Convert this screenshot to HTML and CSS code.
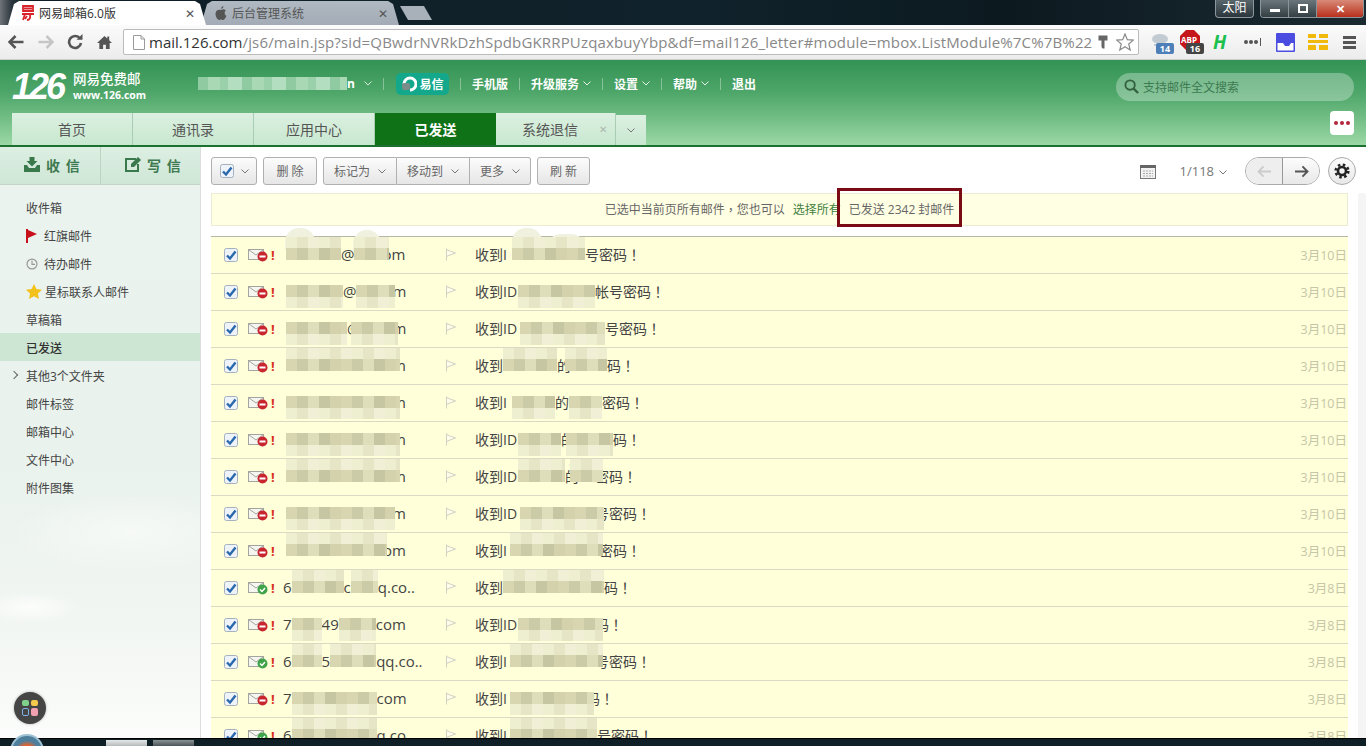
FILE: index.html
```html
<!DOCTYPE html>
<html>
<head>
  <meta charset="UTF-8">
  <title>网易邮箱6.0版</title>
  <link rel="stylesheet" href="styles.css">
</head>
<body>
  <svg class="defs" width="0" height="0">
    <symbol id="check" viewBox="0 0 14 14">
      <rect x="0.5" y="0.5" width="13" height="13" rx="2" fill="#eef3f9" stroke="#a5b1bf"/>
      <path d="M3 7.5 L6 10.5 L11.5 3.5" fill="none" stroke="#2a68ae" stroke-width="2.4"/>
    </symbol>
    <symbol id="mail-fail" viewBox="0 0 20 14">
      <rect x="0.5" y="1.5" width="15" height="10" fill="#f6f6f0" stroke="#a5a5a0"/>
      <path d="M1 2 L8 7 L15 2" fill="none" stroke="#a5a5a0"/>
      <circle cx="14.5" cy="8.5" r="5" fill="#c9252f"/>
      <rect x="11.5" y="7.5" width="6" height="2" fill="#fff"/>
    </symbol>
    <symbol id="mail-ok" viewBox="0 0 20 14">
      <rect x="0.5" y="1.5" width="15" height="10" fill="#f6f6f0" stroke="#a5a5a0"/>
      <path d="M1 2 L8 7 L15 2" fill="none" stroke="#a5a5a0"/>
      <circle cx="14.5" cy="8.5" r="5" fill="#3fa34a"/>
      <path d="M12 8.5 L14 10.5 L17 7" fill="none" stroke="#fff" stroke-width="1.5"/>
    </symbol>
    <symbol id="flag" viewBox="0 0 12 13">
      <path d="M1.5 0.5 V12.5 M1.5 1.5 Q5 3 10.500 5 Q6 6.500 1.500 8.500" fill="#fdfdea" stroke="#d0d0c4"/>
    </symbol>
    <symbol id="chev" viewBox="0 0 8 5">
      <path d="M0.5 0.5 L4 4 L7.5 0.5" fill="none" stroke="currentColor"/>
    </symbol>
  </svg>

  <div class="tabstrip">
    <div class="tab tab-on">
      <svg class="tab-ico" viewBox="0 0 14 16"><path d="M2 1 H12 V6 H2 Z M3 3.5 H11 M1 9 H13 M4 9 L2 15 M9 9 Q10 15 6 15 M6 11 L4 14" fill="none" stroke="#d8232a" stroke-width="1.8"/></svg>
      <span class="tab-title">网易邮箱6.0版</span>
      <span class="tab-x">✕</span>
    </div>
    <div class="tab tab-off">
      <svg class="tab-ico" viewBox="0 0 14 16"><path d="M9.5 1 Q9.5 3.5 7 4 Q7 1.5 9.5 1 Z M7 5 C9 4 10.5 4.200 11.800 5.500 C10 7 10.500 10 12.500 10.800 C11.500 13.500 10 15 9 15 C8 15 7.800 14.500 7 14.500 C6.200 14.500 5.800 15 5 15 C3.500 15 1.500 11.500 1.500 8.800 C1.500 5.500 4.500 4 7 5 Z" fill="#555"/></svg>
      <span class="tab-title">后台管理系统</span>
      <span class="tab-x">✕</span>
    </div>
    <div class="tab-new"></div>
    <div class="winbtns">
      <span class="user-btn">太阳</span>
      <div class="wincontrols">
        <span class="win win-min"><i></i></span>
        <span class="win win-max"><i></i></span>
        <span class="win win-close">✕</span>
      </div>
    </div>
  </div>

  <div class="browserbar">
    <svg class="nav-ico back" viewBox="0 0 16 14"><path d="M7.500 1 L1.500 7 L7.500 13 M2 7 H15.500" fill="none" stroke="currentColor" stroke-width="2.600"/></svg>
    <svg class="nav-ico fwd" viewBox="0 0 16 14"><path d="M8.500 1 L14.500 7 L8.500 13 M14 7 H0.500" fill="none" stroke="currentColor" stroke-width="2.600"/></svg>
    <svg class="nav-ico reload" viewBox="0 0 16 16"><path d="M13 4.500 A6 6 0 1 0 14 9" fill="none" stroke="currentColor" stroke-width="2.600"/><path d="M9.500 5.800 H15.500 V0 Z" fill="currentColor"/></svg>
    <svg class="nav-ico home" viewBox="0 0 16 15"><path d="M8 0.500 L0 8 H2.500 V14.500 H6.500 V10 H9.500 V14.500 H13.500 V8 H16 L13 5.200 V1 H11 V3.300 Z" fill="currentColor"/></svg>
    <div class="omnibox">
      <svg class="doc-ico" viewBox="0 0 12 15"><path d="M0.500 0.500 H8 L11.500 4 V14.500 H0.500 Z M8 0.500 V4 H11.500" fill="#fff" stroke="#9a9a9a"/></svg>
      <span class="url"><b>mail.126.com</b>/js6/main.jsp?sid=QBwdrNVRkDzhSpdbGKRRPUzqaxbuyYbp&amp;df=mail126_letter#module=mbox.ListModule%7C%7B%22</span>
      <svg class="key-ico" viewBox="0 0 10 14"><path d="M0.500 0.500 H9.500 V5.500 H6.500 V13.500 H4.500 L3.500 12 V5.500 H0.500 Z" fill="#666"/></svg>
      <svg class="star-ico" viewBox="0 0 18 18"><path d="M9 1 L11.300 6.700 L17.300 7.100 L12.700 11 L14.200 17 L9 13.700 L3.800 17 L5.300 11 L0.700 7.100 L6.700 6.700 Z" fill="#fff" stroke="#8a8a8a" stroke-width="1.200"/></svg>
    </div>
    <div class="ext ext-weather">
      <svg viewBox="0 0 20 14"><ellipse cx="10" cy="7" rx="8" ry="5" fill="#c3cbd2"/><path d="M5 12 V14 M10 12 V14 M15 12 V14" stroke="#8fa5bb"/></svg>
      <span class="ext-num num-blue">14</span>
    </div>
    <div class="ext ext-abp">
      <svg viewBox="0 0 20 20"><path d="M6 0 H14 L20 6 V14 L14 20 H6 L0 14 V6 Z" fill="#c6141d"/></svg>
      <span class="abp-txt">ABP</span>
      <span class="ext-num num-dark">16</span>
    </div>
    <span class="ext-h">H</span>
    <div class="ext-dots"><i></i><i></i><i></i><em></em></div>
    <svg class="ext-square" viewBox="0 0 19 19"><rect width="19" height="19" rx="1" fill="#4a4de0"/><path d="M1.500 10 H7 L9 13 H13 L15 10 H17.500 V17.500 H1.500 Z" fill="#fff"/></svg>
    <svg class="ext-grid" viewBox="0 0 20 16"><path d="M0 0 H8 V4 H0 Z M11 0 H20 V4 H11 Z M0 6 H20 V9 H0 Z M0 11 H8 V16 H0 Z M11 11 H20 V16 H11 Z" fill="#f1b90a"/></svg>
    <div class="menu-ico"><i></i><i></i><i></i></div>
  </div>

  <div class="mailhead">
    <div class="headrow">
      <div class="logo">
        <span class="logo-num">126</span>
        <div class="logo-txt">
          <span class="logo-cn">网易免费邮</span>
          <span class="logo-en">www.126.com</span>
        </div>
      </div>
      <div class="topnav">
        <div class="account">
          <span class="acc-blur"></span><span class="acc-tail">n</span>
          <svg class="chev acc-chev"><use href="#chev"/></svg>
        </div>
        <span class="sep"></span>
        <span class="yixin">
          <svg viewBox="0 0 16 16"><path d="M3 8 A6 6 0 1 1 9 14" fill="none" stroke="#fff" stroke-width="3"/><rect x="1" y="7" width="8" height="7" rx="2" fill="#7c8c88"/></svg>
          易信
        </span>
        <span class="sep"></span>
        <a class="toplink">手机版</a>
        <span class="sep"></span>
        <a class="toplink">升级服务<svg class="chev"><use href="#chev"/></svg></a>
        <span class="sep"></span>
        <a class="toplink">设置<svg class="chev"><use href="#chev"/></svg></a>
        <span class="sep"></span>
        <a class="toplink">帮助<svg class="chev"><use href="#chev"/></svg></a>
        <span class="sep"></span>
        <a class="toplink">退出</a>
      </div>
      <div class="search">
        <svg viewBox="0 0 16 16"><circle cx="6.500" cy="6.500" r="5" fill="none" stroke="#33603f" stroke-width="2"/><path d="M10 10 L15 15" stroke="#33603f" stroke-width="2.400"/></svg>
        <span>支持邮件全文搜索</span>
      </div>
    </div>
    <div class="navrow">
      <div class="navtab">首页</div>
      <div class="navtab">通讯录</div>
      <div class="navtab">应用中心</div>
      <div class="navtab navtab-on">已发送</div>
      <div class="navtab navtab-close">系统退信<span class="navx">✕</span></div>
      <div class="navmore"><svg class="chev"><use href="#chev"/></svg></div>
      <div class="dots-btn"><i></i><i></i><i></i></div>
    </div>
  </div>

  <div class="main">
    <div class="sidebar">
      <div class="compose">
        <div class="compose-btn">
          <svg viewBox="0 0 16 15"><path d="M5.500 0 H10.500 V4 H13.500 L8 9.500 L2.500 4 H5.500 Z M0 8 H3 L5 11 H11 L13 8 H16 V15 H0 Z" fill="#39794c"/></svg>
          <span>收 信</span>
        </div>
        <div class="compose-btn">
          <svg viewBox="0 0 16 15"><path d="M11 2 H1 V14 H13 V7" fill="none" stroke="#39794c" stroke-width="2"/><path d="M6 7 L13 0 L16 3 L9 10 H6 Z" fill="#39794c"/></svg>
          <span>写 信</span>
        </div>
      </div>
      <ul class="folders">
        <li>收件箱</li>
        <li class="sub"><svg viewBox="0 0 12 14"><path d="M1 0 V14" stroke="#c8101a" stroke-width="2"/><path d="M2 1 L11 5 L2 9 Z" fill="#c8101a"/></svg>红旗邮件</li>
        <li class="sub"><svg viewBox="0 0 14 14"><circle cx="7" cy="7" r="5.800" fill="none" stroke="#999" stroke-width="1.400"/><path d="M7 3 V7.500 H10.500" fill="none" stroke="#999" stroke-width="1.300"/></svg>待办邮件</li>
        <li class="sub star"><svg viewBox="0 0 16 15"><path d="M8 0 L10.400 5 L16 5.700 L11.900 9.400 L13 15 L8 12.300 L3 15 L4.100 9.400 L0 5.700 L5.600 5 Z" fill="#f3c11b"/></svg>星标联系人邮件</li>
        <li>草稿箱</li>
        <li class="on">已发送</li>
        <li class="more">其他3个文件夹</li>
        <li>邮件标签</li>
        <li>邮箱中心</li>
        <li>文件中心</li>
        <li>附件图集</li>
      </ul>
      <div class="appdot">
        <i class="g"></i><i class="y"></i><i class="b"></i><i class="p"></i>
      </div>
    </div>

    <div class="content">
      <div class="toolbar">
        <button class="btn btn-check"><svg class="cb"><use href="#check"/></svg><svg class="chev"><use href="#chev"/></svg></button>
        <button class="btn btn-del">删 除</button>
        <div class="btngroup">
          <button class="btn btn-mark">标记为<svg class="chev"><use href="#chev"/></svg></button>
          <button class="btn btn-move">移动到<svg class="chev"><use href="#chev"/></svg></button>
          <button class="btn btn-more">更多<svg class="chev"><use href="#chev"/></svg></button>
        </div>
        <button class="btn btn-ref">刷 新</button>
        <div class="pager">
          <svg class="cal" viewBox="0 0 16 15"><rect x="0.500" y="1.500" width="15" height="13" fill="#f2f2f2" stroke="#777"/><rect y="1" width="16" height="3" fill="#666"/><path d="M3 7 H13 M3 9.500 H13 M3 12 H13" stroke="#aaa" stroke-dasharray="2 1"/></svg>
          <span class="pageno">1/118<svg class="chev"><use href="#chev"/></svg></span>
          <div class="arrows">
            <span class="arrow arrow-off"><svg viewBox="0 0 16 14"><path d="M7 1.500 L1.500 7 L7 12.500 M2 7 H15" fill="none" stroke="currentColor" stroke-width="2"/></svg></span>
            <span class="arrow"><svg viewBox="0 0 16 14"><path d="M9 1.500 L14.500 7 L9 12.500 M14 7 H1" fill="none" stroke="currentColor" stroke-width="2"/></svg></span>
          </div>
          <span class="gear">
            <svg viewBox="0 0 16 16"><circle cx="8" cy="8" r="4" fill="none" stroke="#222" stroke-width="2.600"/><circle cx="8" cy="8" r="6.300" fill="none" stroke="#222" stroke-width="2.600" stroke-dasharray="2.500 2.450"/></svg>
          </span>
        </div>
      </div>

      <div class="notice">
        已选中当前页所有邮件<span class="punct">，</span>您也可以<a class="notice-link">选择所有</a><span class="notice-count">已发送 2342 封邮件</span>
      </div>

      <div class="scrolltrack"></div>

      <div class="maillist">
        <span class="blob blob-1"></span>
        <span class="blob blob-2"></span>
        <span class="blob blob-3"></span>
        <span class="blob blob-4"></span>

        <div class="row">
          <svg class="cb"><use href="#check"/></svg><svg class="st"><use href="#mail-fail"/></svg><b class="bang">!</b>
          <div class="sender"><span class="mask lead w55"></span>@<span class="mask w35"></span><span class="tail ov7">om</span></div>
          <svg class="fl"><use href="#flag"/></svg>
          <div class="subject">收到I<span class="mask gap5 w73"></span>号密码<span class="punct">！</span></div>
          <div class="date">3月10日</div>
        </div>
        <div class="row">
          <svg class="cb"><use href="#check"/></svg><svg class="st"><use href="#mail-fail"/></svg><b class="bang">!</b>
          <div class="sender"><span class="mask lead down w57"></span>@<span class="mask down w39"></span><span class="tail ov3">m</span></div>
          <svg class="fl"><use href="#flag"/></svg>
          <div class="subject">收到ID<span class="mask down gap1 w77"></span>帐号密码<span class="punct">！</span></div>
          <div class="date">3月10日</div>
        </div>
        <div class="row">
          <svg class="cb"><use href="#check"/></svg><svg class="st"><use href="#mail-fail"/></svg><b class="bang">!</b>
          <div class="sender"><span class="mask lead down w61"></span>@<span class="mask down ov9 w47"></span><span class="tail ov6">m</span></div>
          <svg class="fl"><use href="#flag"/></svg>
          <div class="subject">收到ID<span class="mask down gap3 w85"></span>号密码<span class="punct">！</span></div>
          <div class="date">3月10日</div>
        </div>
        <div class="row">
          <svg class="cb"><use href="#check"/></svg><svg class="st"><use href="#mail-fail"/></svg><b class="bang">!</b>
          <div class="sender"><span class="mask lead w114"></span><span class="tail ov8">m</span></div>
          <svg class="fl"><use href="#flag"/></svg>
          <div class="subject">收到<span class="mask w54"></span>的<span class="mask ov6 w42"></span>码<span class="punct">！</span></div>
          <div class="date">3月10日</div>
        </div>
        <div class="row">
          <svg class="cb"><use href="#check"/></svg><svg class="st"><use href="#mail-fail"/></svg><b class="bang">!</b>
          <div class="sender"><span class="mask lead down w114"></span><span class="tail ov8">m</span></div>
          <svg class="fl"><use href="#flag"/></svg>
          <div class="subject">收到I<span class="mask down gap5 w43"></span>的<span class="mask down w33"></span>密码<span class="punct">！</span></div>
          <div class="date">3月10日</div>
        </div>
        <div class="row">
          <svg class="cb"><use href="#check"/></svg><svg class="st"><use href="#mail-fail"/></svg><b class="bang">!</b>
          <div class="sender"><span class="mask lead down w114"></span><span class="tail ov8">m</span></div>
          <svg class="fl"><use href="#flag"/></svg>
          <div class="subject">收到ID<span class="mask down gap1 w43"></span>的<span class="mask down ov9 w47"></span>码<span class="punct">！</span></div>
          <div class="date">3月10日</div>
        </div>
        <div class="row">
          <svg class="cb"><use href="#check"/></svg><svg class="st"><use href="#mail-fail"/></svg><b class="bang">!</b>
          <div class="sender"><span class="mask lead w114"></span><span class="tail ov8">m</span></div>
          <svg class="fl"><use href="#flag"/></svg>
          <div class="subject">收到ID<span class="mask gap1 w47"></span>的<span class="mask ov9 w33"></span><span class="ov8">密码</span><span class="punct">！</span></div>
          <div class="date">3月10日</div>
        </div>
        <div class="row">
          <svg class="cb"><use href="#check"/></svg><svg class="st"><use href="#mail-fail"/></svg><b class="bang">!</b>
          <div class="sender"><span class="mask lead down w109"></span><span class="tail ov3">m</span></div>
          <svg class="fl"><use href="#flag"/></svg>
          <div class="subject">收到ID<span class="mask down gap3 w84"></span><span class="ov9">号密码</span><span class="punct">！</span></div>
          <div class="date">3月10日</div>
        </div>
        <div class="row">
          <svg class="cb"><use href="#check"/></svg><svg class="st"><use href="#mail-fail"/></svg><b class="bang">!</b>
          <div class="sender"><span class="mask lead w101"></span><span class="tail ov4">om</span></div>
          <svg class="fl"><use href="#flag"/></svg>
          <div class="subject">收到I<span class="mask gap3 w93"></span><span class="ov4">密码</span><span class="punct">！</span></div>
          <div class="date">3月10日</div>
        </div>
        <div class="row">
          <svg class="cb"><use href="#check"/></svg><svg class="st"><use href="#mail-ok"/></svg><b class="bang">!</b>
          <div class="sender">6<span class="mask w52"></span>c<span class="mask w27"></span><span class="tail">q.co..</span></div>
          <svg class="fl"><use href="#flag"/></svg>
          <div class="subject">收到<span class="mask w101"></span>码<span class="punct">！</span></div>
          <div class="date">3月8日</div>
        </div>
        <div class="row">
          <svg class="cb"><use href="#check"/></svg><svg class="st"><use href="#mail-fail"/></svg><b class="bang">!</b>
          <div class="sender">7<span class="mask down w30"></span>49<span class="mask down w37"></span><span class="tail">com</span></div>
          <svg class="fl"><use href="#flag"/></svg>
          <div class="subject">收到ID<span class="mask down gap1 w85"></span><span class="ov8">码</span><span class="punct">！</span></div>
          <div class="date">3月8日</div>
        </div>
        <div class="row">
          <svg class="cb"><use href="#check"/></svg><svg class="st"><use href="#mail-ok"/></svg><b class="bang">!</b>
          <div class="sender">6<span class="mask w30"></span>5<span class="mask w46"></span><span class="tail">qq.co..</span></div>
          <svg class="fl"><use href="#flag"/></svg>
          <div class="subject">收到I<span class="mask gap3 w93"></span><span class="ov8">号密码</span><span class="punct">！</span></div>
          <div class="date">3月8日</div>
        </div>
        <div class="row">
          <svg class="cb"><use href="#check"/></svg><svg class="st"><use href="#mail-fail"/></svg><b class="bang">!</b>
          <div class="sender">7<span class="mask down w85"></span><span class="tail">com</span></div>
          <svg class="fl"><use href="#flag"/></svg>
          <div class="subject">收到I<span class="mask down gap3 w84"></span><span class="ov8">码</span><span class="punct">！</span></div>
          <div class="date">3月8日</div>
        </div>
        <div class="row">
          <svg class="cb"><use href="#check"/></svg><svg class="st"><use href="#mail-ok"/></svg><b class="bang">!</b>
          <div class="sender">6<span class="mask w85"></span><span class="tail">q.co</span></div>
          <svg class="fl"><use href="#flag"/></svg>
          <div class="subject">收到I<span class="mask gap3 w87"></span>号密码<span class="punct">！</span></div>
          <div class="date">3月8日</div>
        </div>
      </div>
    </div>
  </div>

  <div class="taskbar">
    <span class="orb"></span>
    <span class="taskbtn"></span>
    <span class="taskbtn taskbtn-dim"></span>
  </div>
</body>
</html>
```

FILE: styles.css
```css
* {
  box-sizing: border-box;
}

html, body {
  margin: 0;
  height: 746px;
  overflow: hidden;
}

body {
  display: flex;
  flex-direction: column;
  font-family: "Open Sans", "Noto Sans CJK SC", sans-serif;
  font-size: 12px;
  color: #444;
  background: #fff;
}

.defs {
  position: absolute;
}

svg {
  display: block;
  flex: none;
}

.chev {
  width: 8px;
  height: 5px;
  color: #777;
}

/* centred full-width punctuation */
.punct {
  font-family: "Noto Sans CJK TC", sans-serif;
}

/* browser tabs */
.tabstrip {
  height: 25px;
  flex: none;
  display: flex;
  align-items: flex-end;
  padding-left: 8px;
  background: linear-gradient(90deg, #6f7479 0, #28343a 12px, #0f1e26 30px, #10222b 700px, #0c1a20 1000px, #1a2a30 100%);
}

.tab {
  height: 24px;
  width: 198px;
  display: flex;
  align-items: center;
  padding: 0 11px 0 13px;
  font-size: 12px;
  clip-path: polygon(0 100%, 6px 12%, 11px 0, 187px 0, 192px 12%, 100% 100%);
}

.tab-on {
  background: #fff;
  color: #333;
  position: relative;
  z-index: 1;
}

.tab-off {
  margin-left: -5px;
  background: linear-gradient(#b0b8c1, #a3acb6);
  color: #555;
}

.tab-ico {
  width: 14px;
  height: 16px;
  margin-right: 4px;
}

.tab-title {
  flex: 1;
}

.tab-x {
  font-size: 12px;
  color: #555;
}

.tab-new {
  width: 32px;
  height: 14px;
  margin: 0 0 5px 1px;
  background: #a8b0b9;
  clip-path: polygon(0 0, 24px 0, 100% 100%, 8px 100%);
}

.winbtns {
  margin-left: auto;
  align-self: flex-start;
  display: flex;
  padding-right: 2px;
}

.user-btn {
  width: 39px;
  height: 18px;
  margin-right: 6px;
  border: 1px solid #8b979c;
  border-top: none;
  border-radius: 0 0 4px 4px;
  background: linear-gradient(#59666b, #2a363b);
  color: #fff;
  font-size: 12px;
  line-height: 16px;
  text-align: center;
}

.wincontrols {
  display: flex;
  height: 18px;
  border: 1px solid #8b979c;
  border-top: none;
  border-radius: 0 0 4px 4px;
  overflow: hidden;
}

.win {
  width: 28px;
  display: flex;
  align-items: center;
  justify-content: center;
  background: linear-gradient(#6a767b, #343f44);
  border-right: 1px solid #87949a;
}

.win-min i {
  width: 10px;
  height: 3px;
  margin-top: 3px;
  background: #fff;
}

.win-max i {
  width: 10px;
  height: 9px;
  border: 2px solid #fff;
}

.win-close {
  width: 46px;
  border: none;
  background: linear-gradient(#d98a78, #b8301c);
  color: #fff;
  font-size: 11px;
  font-weight: 700;
}

/* browser toolbar */
.browserbar {
  height: 35px;
  flex: none;
  display: flex;
  align-items: center;
  padding-left: 8px;
  background: linear-gradient(#fbfbfb, #ececec);
  border-bottom: 1px solid #ccc;
}

.nav-ico {
  color: #555;
}

.back {
  width: 16px;
  height: 14px;
}

.fwd {
  width: 16px;
  height: 14px;
  margin-left: 14px;
  color: #c6c6c6;
}

.reload {
  width: 16px;
  height: 16px;
  margin-left: 13px;
}

.home {
  width: 15px;
  height: 15px;
  margin-left: 14px;
}

.omnibox {
  width: 1016px;
  height: 26px;
  margin-left: 11px;
  display: flex;
  align-items: center;
  padding: 0 4px 0 9px;
  background: #fff;
  border: 1px solid #bbb;
  border-radius: 2px;
}

.doc-ico {
  width: 12px;
  height: 15px;
  margin-right: 4px;
}

.url {
  flex: 1;
  font-size: 15px;
  letter-spacing: 0.16px;
  color: #888;
  white-space: nowrap;
  overflow: hidden;
}

.url b {
  font-weight: 400;
  letter-spacing: 0;
  color: #333;
}

.key-ico {
  width: 10px;
  height: 14px;
  margin-right: 8px;
}

.star-ico {
  width: 18px;
  height: 18px;
}

.ext {
  position: relative;
  flex: none;
}

.ext-weather {
  width: 24px;
  height: 24px;
  margin-left: 11px;
}

.ext-weather svg {
  width: 20px;
  height: 14px;
  margin-top: 2px;
}

.ext-abp {
  width: 24px;
  height: 24px;
  margin-left: 6px;
}

.ext-abp svg {
  width: 20px;
  height: 20px;
}

.abp-txt {
  position: absolute;
  left: 1px;
  top: 4px;
  color: #fff;
  font-size: 8px;
  font-weight: 700;
}

.ext-num {
  position: absolute;
  right: 0;
  bottom: 0;
  width: 18px;
  height: 11px;
  border-radius: 2px;
  color: #fff;
  font-size: 9px;
  font-weight: 700;
  line-height: 11px;
  text-align: center;
}

.num-blue {
  background: #4f7fb8;
}

.num-dark {
  background: #444;
}

.ext-h {
  width: 18px;
  margin-left: 9px;
  color: #1cc04e;
  font-size: 19px;
  font-weight: 700;
  font-style: italic;
  line-height: 1;
}

.ext-dots {
  width: 20px;
  margin-left: 13px;
  display: flex;
  align-items: center;
  gap: 1px;
}

.ext-dots i {
  width: 4px;
  height: 4px;
  border-radius: 50%;
  background: #555;
}

.ext-dots em {
  width: 1px;
  height: 8px;
  margin-left: 1px;
  background: #555;
}

.ext-square {
  width: 19px;
  height: 19px;
  margin-left: 12px;
}

.ext-grid {
  width: 20px;
  height: 16px;
  margin-left: 13px;
}

.menu-ico {
  width: 13px;
  margin-left: 15px;
  display: flex;
  flex-direction: column;
  gap: 2px;
}

.menu-ico i {
  height: 3px;
  background: #555;
}

/* mail header */
.mailhead {
  height: 87px;
  flex: none;
  display: flex;
  flex-direction: column;
  padding-left: 12px;
  background: linear-gradient(#329354 0, #4ea669 38%, #74bf87 70%, #9bd8a6 100%);
  border-bottom: 2px solid #1c7030;
}

.headrow {
  height: 53px;
  flex: none;
  display: flex;
  align-items: center;
  color: #fff;
}

.logo {
  width: 186px;
  flex: none;
  display: flex;
  align-items: center;
}

.logo-num {
  width: 60px;
  font-family: "Liberation Sans", sans-serif;
  font-size: 36px;
  font-weight: 700;
  font-style: italic;
  letter-spacing: -3px;
  line-height: 1;
}

.logo-txt {
  display: flex;
  flex-direction: column;
  margin-left: 1px;
}

.logo-cn {
  font-size: 13.5px;
  font-weight: 500;
  line-height: 17px;
}

.logo-en {
  font-size: 10.5px;
  font-weight: 700;
  line-height: 15px;
}

.topnav {
  display: flex;
  align-items: center;
  padding-bottom: 6px;
}

.account {
  width: 174px;
  flex: none;
  display: flex;
  align-items: center;
}

.acc-blur {
  width: 152px;
  height: 13px;
  background: repeating-linear-gradient(90deg, #8fcaa0 0 10px, #a8d8b4 10px 22px, #9ad0aa 22px 30px, #b4dec0 30px 44px);
}

.acc-tail {
  font-size: 12px;
  font-weight: 700;
}

.acc-chev {
  margin-left: 9px;
  color: #d5eedc;
}

.sep {
  width: 1px;
  height: 12px;
  margin: 0 11px;
  flex: none;
  background: rgba(255, 255, 255, 0.35);
}

.yixin {
  width: 53px;
  height: 22px;
  flex: none;
  display: flex;
  align-items: center;
  justify-content: center;
  gap: 2px;
  margin-left: 1px;
  border-radius: 5px;
  background: #13a88c;
  font-size: 12px;
  font-weight: 700;
}

.yixin svg {
  width: 16px;
  height: 16px;
}

.toplink {
  display: flex;
  align-items: center;
  font-size: 12px;
  font-weight: 700;
  gap: 4px;
}

.toplink .chev {
  color: #e3f3e7;
}

.search {
  width: 238px;
  height: 28px;
  margin-left: auto;
  margin-right: 12px;
  display: flex;
  align-items: center;
  gap: 4px;
  padding-left: 8px;
  border-radius: 14px;
  background: rgba(255, 255, 255, 0.3);
  color: #3c7a50;
  font-size: 12px;
}

.search svg {
  width: 15px;
  height: 15px;
}

.navrow {
  flex: 1;
  display: flex;
  align-items: flex-end;
}

.navtab {
  width: 121px;
  height: 32px;
  display: flex;
  align-items: center;
  justify-content: center;
  position: relative;
  padding-bottom: 1px;
  background: linear-gradient(#dcf0e1, #c8e8d0);
  border-right: 1px solid #a9cdb3;
  color: #555;
  font-size: 14px;
}

.navtab-on {
  background: #0f7216;
  border: none;
  color: #fff;
  font-weight: 700;
}

.navtab-close {
  width: 120px;
  justify-content: flex-start;
  padding-left: 26px;
}

.navx {
  position: absolute;
  right: 8px;
  color: #aab8ae;
  font-size: 10px;
}

.navmore {
  width: 30px;
  height: 30px;
  display: flex;
  align-items: center;
  justify-content: center;
  background: linear-gradient(#dcf0e1, #c8e8d0);
}

.dots-btn {
  width: 24px;
  height: 24px;
  margin: -2px 12px 10px auto;
  display: flex;
  align-items: center;
  justify-content: center;
  gap: 2px;
  border-radius: 4px;
  background: #fff;
}

.dots-btn i {
  width: 4px;
  height: 4px;
  border-radius: 50%;
  background: #b3263a;
}

/* page body */
.main {
  flex: 1;
  min-height: 0;
  display: flex;
  overflow: hidden;
}

.sidebar {
  width: 201px;
  flex: none;
  position: relative;
  border-right: 1px solid #ddd;
  background:
    radial-gradient(ellipse 50px 16px at 30px 460px, rgba(255, 255, 255, 0.8), transparent),
    radial-gradient(ellipse 120px 40px at 130px 385px, rgba(255, 255, 255, 0.5), transparent),
    linear-gradient(#eaf3ee 0, #e9f2ec 300px, #f0f5f1 450px, #fbfcfb 100%);
}

.compose {
  height: 38px;
  display: flex;
  background: linear-gradient(#dcefe2, #cfe6d7);
  border-bottom: 1px solid #c3d5c9;
}

.compose-btn {
  width: 100px;
  display: flex;
  align-items: center;
  gap: 6px;
  padding: 0 0 2px 24px;
  color: #3e7a50;
  font-size: 14px;
  font-weight: 700;
  letter-spacing: 1px;
}

.compose-btn + .compose-btn {
  border-left: 1px solid #bdd4c5;
}

.compose-btn svg {
  width: 16px;
  height: 15px;
}

.folders {
  list-style: none;
  margin: 0;
  padding: 8px 0 0;
}

.folders li {
  height: 28px;
  display: flex;
  align-items: center;
  padding: 1px 0 0 26px;
  position: relative;
  color: #444;
  font-size: 12px;
}

.folders .sub svg {
  width: 12px;
  height: 14px;
  margin-right: 6px;
}

.folders .star svg {
  width: 16px;
  height: 15px;
  margin-right: 3px;
}

.folders .on {
  background: #cde6d3;
  color: #333;
  font-weight: 500;
}

.folders .more::before {
  content: "";
  position: absolute;
  left: 11px;
  top: 11px;
  width: 5px;
  height: 5px;
  border-top: 1px solid #666;
  border-right: 1px solid #666;
  transform: rotate(45deg);
}

.appdot {
  position: absolute;
  left: 14px;
  top: 545px;
  width: 32px;
  height: 32px;
  padding: 8px;
  display: grid;
  grid-template-columns: 1fr 1fr;
  gap: 2px;
  border-radius: 50%;
  background: #454545;
  box-shadow: 0 0 3px rgba(0, 0, 0, 0.3);
}

.appdot i {
  border-radius: 2px;
}

.appdot .g {
  background: #7ed08a;
}

.appdot .y {
  background: #f2c94c;
}

.appdot .b {
  border: 1px solid #7fb0e6;
}

.appdot .p {
  background: #f0a0b0;
}

.content {
  flex: 1;
  min-width: 0;
  position: relative;
  padding: 10px 18px 0 10px;
}

.toolbar {
  height: 28px;
  display: flex;
  gap: 6px;
}

.btn {
  height: 28px;
  margin: 0;
  padding: 0;
  display: flex;
  align-items: center;
  justify-content: center;
  border: 1px solid #b0b0b0;
  border-radius: 3px;
  background: linear-gradient(#fcfcfc, #e6e6e6);
  color: #666;
  font-family: inherit;
  font-size: 12px;
}

.btn-check {
  width: 46px;
  gap: 7px;
}

.btn .cb {
  width: 14px;
  height: 14px;
}

.btn-del {
  width: 54px;
}

.btn-ref {
  width: 53px;
}

.btngroup {
  display: flex;
}

.btngroup .btn {
  gap: 8px;
  border-radius: 0;
  border-left: none;
}

.btngroup .btn:first-child {
  border-left: 1px solid #b0b0b0;
  border-radius: 3px 0 0 3px;
}

.btngroup .btn:last-child {
  border-radius: 0 3px 3px 0;
}

.btn-mark {
  width: 74px;
}

.btn-move {
  width: 73px;
}

.btn-more {
  width: 61px;
}

.pager {
  margin-left: auto;
  margin-right: -8px;
  display: flex;
  align-items: center;
}

.cal {
  width: 16px;
  height: 15px;
}

.pageno {
  display: flex;
  align-items: center;
  gap: 5px;
  margin-left: 24px;
  color: #777;
  font-size: 13px;
}

.pageno .chev {
  margin-top: 2px;
}

.arrows {
  width: 75px;
  height: 28px;
  margin-left: 18px;
  display: flex;
  border: 1px solid #aaa;
  border-radius: 14px;
  overflow: hidden;
}

.arrow {
  flex: 1;
  display: flex;
  align-items: center;
  justify-content: center;
  background: linear-gradient(#fcfcfc, #e8e8e8);
  color: #555;
}

.arrow svg {
  width: 15px;
  height: 13px;
}

.arrow-off {
  border-right: 1px solid #999;
  background: #eee;
  color: #ccc;
}

.gear {
  width: 28px;
  height: 28px;
  margin-left: 8px;
  display: flex;
  align-items: center;
  justify-content: center;
  border: 1px solid #aaa;
  border-radius: 50%;
  background: linear-gradient(#fcfcfc, #e8e8e8);
}

.gear svg {
  width: 16px;
  height: 16px;
}

.notice {
  height: 33px;
  margin-top: 8px;
  display: flex;
  align-items: center;
  justify-content: center;
  padding-bottom: 1px;
  background: #ffffe3;
  border: 1px solid #ecebd4;
  color: #666;
  font-size: 12px;
}

.notice-link {
  margin-left: 8px;
  color: #3f7f3f;
}

.notice-count {
  position: relative;
  margin-left: 8px;
}

/* annotation frame drawn over the notice */
.notice-count::after {
  content: "";
  position: absolute;
  left: -12px;
  right: -8px;
  top: -12px;
  bottom: -9px;
  border: 3px solid #7a0a14;
}

.scrolltrack {
  position: absolute;
  right: 0;
  top: 46px;
  bottom: 0;
  width: 8px;
  background: #f5f5f5;
  border-radius: 3px 3px 0 0;
}

.maillist {
  position: relative;
  margin-top: 10px;
  border-top: 1px solid #b5b8a5;
}

/* smudges from the original blur that spill past the first row */
.blob {
  position: absolute;
  height: 22px;
  border-radius: 14px 14px 0 0;
  background: #f1f1e0;
  z-index: 1;
}

.blob-1 {
  left: 74px;
  top: -9px;
  width: 30px;
}

.blob-2 {
  left: 142px;
  top: -7px;
  width: 28px;
}

.blob-3 {
  left: 301px;
  top: -9px;
  width: 30px;
}

.blob-4 {
  left: 336px;
  top: -3px;
  width: 38px;
}

.row {
  height: 37px;
  display: flex;
  align-items: center;
  padding: 0 0 1px 13px;
  background: #ffffd9;
  border-bottom: 1px solid #d9d9c4;
}

.row .cb {
  width: 14px;
  height: 14px;
}

.st {
  width: 20px;
  height: 14px;
  margin-left: 10px;
}

.bang {
  width: 6px;
  margin-left: 3px;
  color: #d8301c;
  font-size: 13px;
  font-weight: 700;
  line-height: 14px;
}

.sender {
  width: 162px;
  margin-left: 6px;
  padding-bottom: 2px;
  display: flex;
  align-items: center;
  color: #444;
  font-size: 15px;
  white-space: nowrap;
}

.fl {
  width: 12px;
  height: 13px;
}

.subject {
  flex: 1;
  margin-left: 18px;
  padding-bottom: 2px;
  display: flex;
  align-items: center;
  color: #444;
  font-size: 14px;
  white-space: nowrap;
}

.date {
  padding: 0 1px 1px 0;
  color: #c6c6a8;
  font-size: 12.5px;
}

/* mosaic over private text */
.mask {
  height: 12px;
  flex: none;
  position: relative;
  z-index: 1;
  background: repeating-linear-gradient(90deg, #d7d6b1 0 11px, #cccba7 11px 22px, #dfdebb 22px 33px, #c7c6a3 33px 44px, #d3d2ad 44px 55px);
}

.mask::before {
  content: "";
  position: absolute;
  left: 0;
  right: 0;
  bottom: 100%;
  height: 11px;
  background: repeating-linear-gradient(90deg, #eeeed0 0 11px, #e6e5c6 11px 22px, #f1f0d6 22px 33px);
}

.mask.down::before {
  top: 100%;
  bottom: auto;
}

.lead {
  margin-left: 3px;
}

.gap1 {
  margin-left: 1px;
}

.gap3 {
  margin-left: 3px;
}

.gap5 {
  margin-left: 5px;
}

.w27 { width: 27px; }
.w30 { width: 30px; }
.w33 { width: 33px; }
.w35 { width: 35px; }
.w37 { width: 37px; }
.w39 { width: 39px; }
.w42 { width: 42px; }
.w43 { width: 43px; }
.w46 { width: 46px; }
.w47 { width: 47px; }
.w52 { width: 52px; }
.w54 { width: 54px; }
.w55 { width: 55px; }
.w57 { width: 57px; }
.w61 { width: 61px; }
.w73 { width: 73px; }
.w77 { width: 77px; }
.w84 { width: 84px; }
.w85 { width: 85px; }
.w87 { width: 87px; }
.w93 { width: 93px; }
.w101 { width: 101px; }
.w109 { width: 109px; }
.w114 { width: 114px; }

.ov3 { margin-left: -3px; }
.ov4 { margin-left: -4px; }
.ov6 { margin-left: -6px; }
.ov7 { margin-left: -7px; }
.ov8 { margin-left: -8px; }
.ov9 { margin-left: -9px; }

/* windows taskbar */
.taskbar {
  height: 8px;
  flex: none;
  position: relative;
  display: flex;
  align-items: flex-end;
  gap: 6px;
  padding-left: 106px;
  background: #0f1f26;
  border-top: 1px solid #000;
}

.orb {
  position: absolute;
  left: 10px;
  top: -5px;
  width: 34px;
  height: 34px;
  border-radius: 50%;
  background: radial-gradient(circle at 50% 55%, #e8622a 0 7px, #4d7f9c 12px);
  border: 2px solid #9fc1d4;
}

.taskbtn {
  width: 41px;
  height: 6px;
  background: linear-gradient(#e6e8e8, #b5baba);
}

.taskbtn-dim {
  background: linear-gradient(#8b9294, #4c5558);
}
```
